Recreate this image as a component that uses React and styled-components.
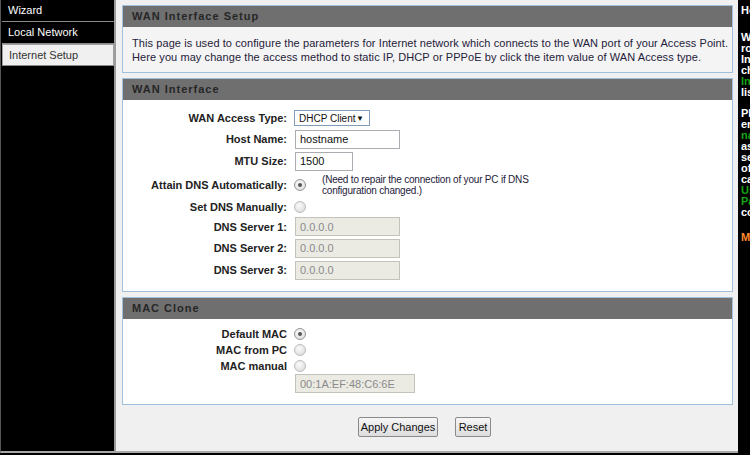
import styled, { createGlobalStyle } from "styled-components";

const GlobalStyle = createGlobalStyle`
  *, *::before, *::after { box-sizing: border-box; }
  html, body { margin: 0; padding: 0; background: #000; }
  body {
    font-family: "Liberation Sans", Arial, sans-serif;
    font-size: 11px;
    color: #222;
  }
  #root { width: 750px; height: 455px; overflow: hidden; }
`;

const Page = styled.div`
  display: grid;
  grid-template-columns: 116px 622px 12px;
  height: 455px;
  background: #000;
`;

const Sidebar = styled.nav`
  height: 453px;
  border-left: 1px solid #555;
  border-right: 2px solid #9c9c9c;
  border-bottom: 2px solid #a9a9a9;
  background: #000;
  padding-left: 1px;
`;

const NavItem = styled.div`
  height: 22px;
  line-height: 21px;
  padding-left: 6px;
  color: ${(p) => (p.$active ? "#333" : "#fff")};
  background: ${(p) => (p.$active ? "#f0f0f0" : "#000")};
  border: ${(p) => (p.$active ? "1px solid #a0a0a0" : "none")};
  border-bottom: 1px solid #8a8a8a;
  margin-bottom: ${(p) => (p.$active ? 1 : 0)}px;
`;

const Main = styled.main`
  height: 453px;
  background: #f0f0f0;
  border-bottom: 2px solid #a9a9a9;
  padding: 5px 5px 0 6px;
`;

const Section = styled.section`
  border: 1px solid #9fc0dd;
  background: ${(p) => (p.$tint ? "#f4f4f4" : "#fff")};
  margin-bottom: 5px;
`;

const SectionHeader = styled.h2`
  margin: 0;
  height: 21px;
  line-height: 21px;
  padding-left: 9px;
  background: #6f6f6f;
  color: #262626;
  font-size: 11px;
  font-weight: bold;
  letter-spacing: 1px;
`;

const Intro = styled.p`
  margin: 0;
  padding: 9px 9px 8px;
  line-height: 14px;
  letter-spacing: 0.08px;
  white-space: nowrap;
  color: #24213a;
`;

const FormBody = styled.div`
  padding: ${(p) => p.$pad};
`;

const Row = styled.div`
  display: grid;
  grid-template-columns: 164px 1fr;
  column-gap: 8px;
  align-items: center;
  height: ${(p) => p.$h}px;
`;

const Label = styled.div`
  text-align: right;
  font-weight: bold;
  color: #222;
`;

const Controls = styled.div`
  display: flex;
  align-items: center;
  gap: 16px;
`;

const FakeSelect = styled.div`
  display: flex;
  justify-content: space-between;
  align-items: center;
  width: 76px;
  height: 16px;
  margin-left: -1px;
  padding: 0 5px 0 4px;
  border: 1px solid #7f9db9;
  background: #fff;
  font-size: 10px;
  white-space: nowrap;
  color: #111;

  span { font-size: 8px; }
`;

const TextBox = styled.input`
  width: ${(p) => p.$w}px;
  height: 19px;
  padding: 0 4px;
  border: 1px solid ${(p) => (p.disabled ? "#c3c3bb" : "#abadb3")};
  background: ${(p) => (p.disabled ? "#ebebe4" : "#fff")};
  color: ${(p) => (p.disabled ? "#8a8a8a" : "#111")};
  font-family: inherit;
  font-size: 11px;
  outline: none;
`;

const Radio = styled.span`
  position: relative;
  display: inline-block;
  width: 12px;
  height: 12px;
  margin-left: -1px;
  border-radius: 50%;
  border: 1px solid ${(p) => (p.$checked ? "#959595" : "#bbbbbb")};
  background: radial-gradient(circle at 40% 35%, #fafafa, #d8d8d8);

  &::after {
    content: "";
    display: ${(p) => (p.$checked ? "block" : "none")};
    position: absolute;
    left: 3px;
    top: 3px;
    width: 4px;
    height: 4px;
    border-radius: 50%;
    background: #555;
  }
`;

const Note = styled.div`
  font-size: 10px;
  line-height: 11px;
  letter-spacing: -0.2px;
  color: #24213a;
`;

const ButtonRow = styled.div`
  display: flex;
  justify-content: center;
  gap: 17px;
  padding-top: 7px;
  padding-right: 6px;
`;

const Button = styled.button`
  width: ${(p) => p.$w}px;
  height: 20px;
  padding: 0;
  border: 1px solid #8a8a8a;
  border-radius: 2px;
  background: linear-gradient(#f6f6f6, #dddddd);
  font-family: inherit;
  font-size: 11px;
  color: #111;
`;

const Help = styled.aside`
  padding: 5px 0 0 3px;
  overflow: hidden;
  white-space: nowrap;
  font-weight: bold;
  font-size: 11px;
  line-height: 11px;
  color: #fff;
`;

const HelpLine = styled.div`
  height: 11px;
  color: ${(p) => p.$color || "#fff"};
  margin-bottom: ${(p) => p.$gap || 0}px;
`;

const helpLines = [
  { t: "Helpful Hints...", gap: 16 },
  { t: "When configuring the" },
  { t: "router to access the" },
  { t: "Internet, be sure to" },
  { t: "choose the correct" },
  { t: "Internet Connection Type", c: "#16a316" },
  { t: "list from the drop down menu.", gap: 10 },
  { t: "Please make sure you" },
  { t: "enter the correct user" },
  { t: "name and password", c: "#16a316" },
  { t: "assigned by your" },
  { t: "service provider. Some" },
  { t: "of them are case sensitive," },
  { t: "carefully enter your" },
  { t: "User Name", c: "#16a316" },
  { t: "Password", c: "#16a316" },
  { t: "correctly.", gap: 14 },
  { t: "More...", c: "#ff8a2a" },
];

export default function App() {
  return (
    <>
      <GlobalStyle />
      <Page>
        <Sidebar>
          <NavItem>Wizard</NavItem>
          <NavItem>Local Network</NavItem>
          <NavItem $active>Internet Setup</NavItem>
        </Sidebar>

        <Main>
          <Section $tint>
            <SectionHeader>WAN Interface Setup</SectionHeader>
            <Intro>
              This page is used to configure the parameters for Internet network which connects to the WAN port of your Access Point.
              <br />
              Here you may change the access method to static IP, DHCP or PPPoE by click the item value of WAN Access type.
            </Intro>
          </Section>

          <Section>
            <SectionHeader>WAN Interface</SectionHeader>
            <FormBody $pad="8px 0 10px">
              <Row $h={20}>
                <Label>WAN Access Type:</Label>
                <Controls>
                  <FakeSelect>
                    DHCP Client <span>▼</span>
                  </FakeSelect>
                </Controls>
              </Row>
              <Row $h={22}>
                <Label>Host Name:</Label>
                <Controls>
                  <TextBox $w={105} defaultValue="hostname" />
                </Controls>
              </Row>
              <Row $h={22}>
                <Label>MTU Size:</Label>
                <Controls>
                  <TextBox $w={58} defaultValue="1500" />
                </Controls>
              </Row>
              <Row $h={26}>
                <Label>Attain DNS Automatically:</Label>
                <Controls>
                  <Radio $checked />
                  <Note>
                    (Need to repair the connection of your PC if DNS
                    <br />
                    configuration changed.)
                  </Note>
                </Controls>
              </Row>
              <Row $h={18}>
                <Label>Set DNS Manually:</Label>
                <Controls>
                  <Radio />
                </Controls>
              </Row>
              <Row $h={21}>
                <Label>DNS Server 1:</Label>
                <Controls>
                  <TextBox $w={105} disabled defaultValue="0.0.0.0" />
                </Controls>
              </Row>
              <Row $h={22}>
                <Label>DNS Server 2:</Label>
                <Controls>
                  <TextBox $w={105} disabled defaultValue="0.0.0.0" />
                </Controls>
              </Row>
              <Row $h={22}>
                <Label>DNS Server 3:</Label>
                <Controls>
                  <TextBox $w={105} disabled defaultValue="0.0.0.0" />
                </Controls>
              </Row>
            </FormBody>
          </Section>

          <Section>
            <SectionHeader>MAC Clone</SectionHeader>
            <FormBody $pad="7px 0 11px">
              <Row $h={16}>
                <Label>Default MAC</Label>
                <Controls>
                  <Radio $checked />
                </Controls>
              </Row>
              <Row $h={16}>
                <Label>MAC from PC</Label>
                <Controls>
                  <Radio />
                </Controls>
              </Row>
              <Row $h={16}>
                <Label>MAC manual</Label>
                <Controls>
                  <Radio />
                </Controls>
              </Row>
              <Row $h={19}>
                <div />
                <Controls>
                  <TextBox $w={120} disabled defaultValue="00:1A:EF:48:C6:6E" />
                </Controls>
              </Row>
            </FormBody>
          </Section>

          <ButtonRow>
            <Button $w={80}>Apply Changes</Button>
            <Button $w={36}>Reset</Button>
          </ButtonRow>
        </Main>

        <Help>
          {helpLines.map((l, i) => (
            <HelpLine key={i} $color={l.c} $gap={l.gap}>
              {l.t}
            </HelpLine>
          ))}
        </Help>
      </Page>
    </>
  );
}
